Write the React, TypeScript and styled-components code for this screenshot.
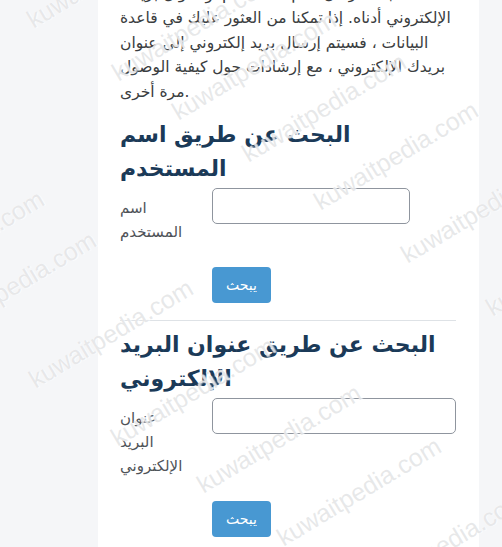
import styled, { createGlobalStyle } from "styled-components";

const GlobalStyle = createGlobalStyle`
  html, body {
    margin: 0;
    padding: 0;
    background: #f5f6f8;
    overflow: hidden;
  }
  body {
    font-family: "DejaVu Sans", "Noto Sans", sans-serif;
  }
`;

const Page = styled.div`
  position: relative;
  width: 502px;
  height: 547px;
  overflow: hidden;
  background: #f5f6f8;
`;

const Card = styled.main`
  width: 381px;
  margin: -43px 0 0 98px;
  padding: 0 23px 40px 22px;
  box-sizing: border-box;
  background: #ffffff;
`;

const Intro = styled.p`
  margin: 0;
  font-size: 15.5px;
  line-height: 24.5px;
  color: #3a3d40;
`;

const Divider = styled.hr`
  margin: 17px 0 0;
  border: 0;
  border-top: 1px solid #dee2e6;
`;

const SectionTitle = styled.h3`
  margin: 14px 0 2px;
  font-size: 22px;
  line-height: 34px;
  font-weight: 700;
  color: #1b3a58;

  ${Divider} + & {
    margin-top: 7px;
  }
`;

const FormRow = styled.div`
  display: grid;
  grid-template-columns: 70px 1fr;
  column-gap: 22px;
  align-items: start;
`;

const FieldLabel = styled.label`
  padding-top: 8px;
  font-size: 15px;
  line-height: 24px;
  color: #4f5358;
`;

const TextInput = styled.input<{ $width?: number }>`
  box-sizing: border-box;
  width: ${(p) => (p.$width ? `${p.$width}px` : "100%")};
  height: 36px;
  border: 1px solid #8f959e;
  border-radius: 5px;
  background: #fff;
  padding: 0 10px;
  font: inherit;
`;

const ButtonRow = styled.div`
  margin: 23px 0 0 92px;
`;

const SearchButton = styled.button`
  width: 59px;
  height: 36px;
  border: none;
  border-radius: 4px;
  background: #4898d2;
  color: #ffffff;
  font-family: inherit;
  font-size: 14px;
  font-weight: 400;
`;

const Watermarks = styled.div`
  position: absolute;
  inset: 0;
  pointer-events: none;
`;

const Mark = styled.span`
  position: absolute;
  font-family: "Liberation Sans", Arial, sans-serif;
  font-size: 25px;
  line-height: 25px;
  white-space: nowrap;
  color: rgba(205, 207, 210, 0.48);
  text-shadow: 0 0 1px rgba(255, 255, 255, 0.9), 1px 1px 1px rgba(255, 255, 255, 0.6);
  transform-origin: 0 20px;
  transform: rotate(-31deg);
`;

// start points (baseline, left) of each repeated site mark
const markSpots: [number, number][] = [
  [33, 28],
  [118, 81],
  [178, 120],
  [248, 162],
  [320, 210],
  [407, 263],
  [492, 316],
  [-177, 252],
  [-114, 299],
  [-62, 340],
  [35, 388],
  [117, 446],
  [203, 493],
  [283, 546],
  [368, 599],
  [-177, 607],
];

function App() {
  return (
    <Page>
      <GlobalStyle />
      <Card>
        <Intro>
          لإعادة تعيين كلمة المرور
          <br />
          الخاصة بك ، أرسل اسم المستخدم أو عنوان بريدك
          <br />
          الإلكتروني أدناه. إذا تمكنا من العثور عليك في قاعدة
          <br />
          البيانات ، فسيتم إرسال بريد إلكتروني إلى عنوان
          <br />
          بريدك الإلكتروني ، مع إرشادات حول كيفية الوصول
          <br />
          مرة أخرى.
        </Intro>

        <SectionTitle>البحث عن طريق اسم المستخدم</SectionTitle>
        <FormRow>
          <FieldLabel htmlFor="id_username">اسم المستخدم</FieldLabel>
          <TextInput id="id_username" type="text" $width={198} />
        </FormRow>
        <ButtonRow>
          <SearchButton type="button">يبحث</SearchButton>
        </ButtonRow>

        <Divider />

        <SectionTitle>البحث عن طريق عنوان البريد الإلكتروني</SectionTitle>
        <FormRow>
          <FieldLabel htmlFor="id_email">عنوان البريد الإلكتروني</FieldLabel>
          <TextInput id="id_email" type="text" />
        </FormRow>
        <ButtonRow>
          <SearchButton type="button">يبحث</SearchButton>
        </ButtonRow>
      </Card>

      <Watermarks>
        {markSpots.map(([x, y], i) => (
          <Mark key={i} style={{ left: x, top: y - 20 }}>
            kuwaitpedia.com
          </Mark>
        ))}
      </Watermarks>
    </Page>
  );
}

export default App;
